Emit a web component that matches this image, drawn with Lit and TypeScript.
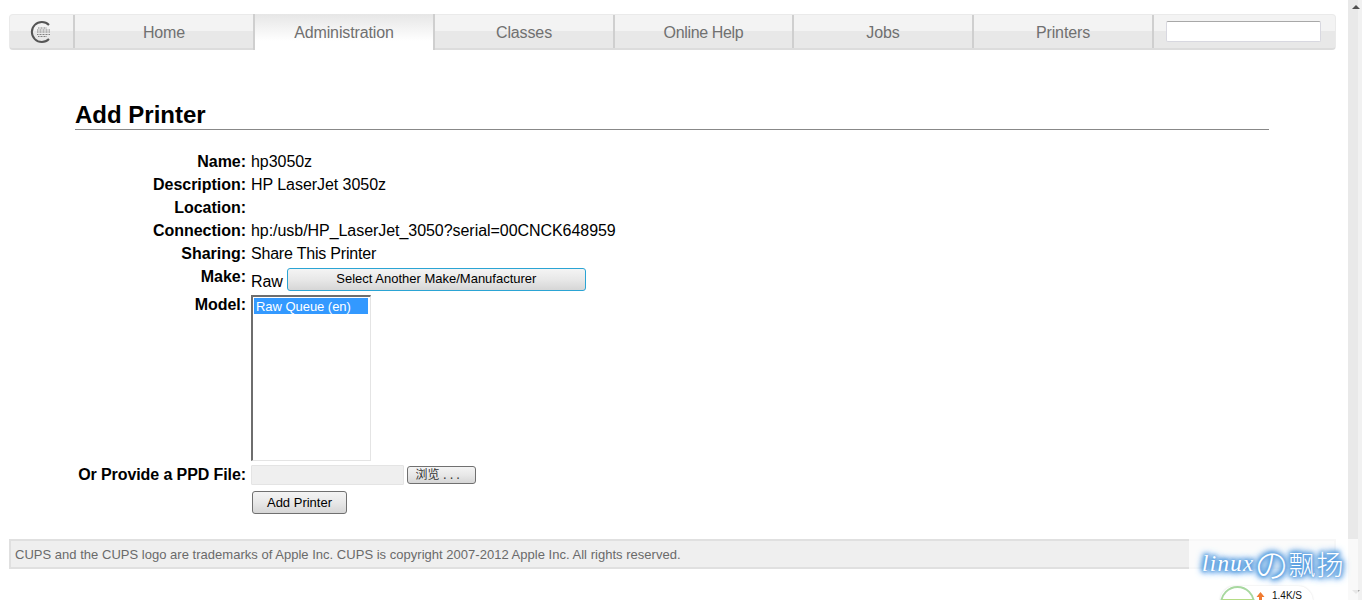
import { LitElement, html, css } from "lit";
import { customElement } from "lit/decorators.js";

const TABS = ["Home", "Administration", "Classes", "Online Help", "Jobs", "Printers"];

@customElement("app-root")
export class AppRoot extends LitElement {
  static styles = css`
    :host { display: flex; height: 600px; overflow: hidden; position: relative; background: #fff;
      font-family: "Liberation Sans", Arial, sans-serif; color: #000; }
    .page { width: 1348px; flex: none; padding: 14px 12px 0 9px; box-sizing: border-box; }
    .nav { display: flex; height: 36px; box-sizing: border-box; border: 1px solid #eaeaea; border-bottom: 2px solid #dcdcdc;
      border-radius: 4px; background: linear-gradient(#f3f3f3 0, #f3f3f3 50%, #e8e8e8 50%, #e8e8e8 100%); }
    .logo { width: 63px; flex: none; display: flex; align-items: center; justify-content: center; }
    .tab { flex: none; width: 180px; box-sizing: border-box; border-left: 2px solid #cfcfcf; display: flex; align-items: center; justify-content: center;
      font-size: 16px; color: #707070; padding-top: 2px; letter-spacing: -0.12px; }
    .tab.help { width: 179px; letter-spacing: -0.35px; }
    .tab.active { height: 36px; margin-top: -1px; padding-top: 1px; background: linear-gradient(#e6e6e6 0, #fff 75%, #fff 100%); border-right: 2px solid #cfcfcf; margin-right: -2px; width: 182px; position: relative; z-index: 1; }
    .search-cell { flex: 1; border-left: 2px solid #cfcfcf; display: flex; align-items: center; padding-left: 12px; }
    .search { width: 155px; height: 21px; box-sizing: border-box; background: #fff; border: 1px solid #d8d8e0; border-top: 1px solid #a8a8a8; border-radius: 2px; }
    .content { padding: 50px 67px 0 66px; }
    h1 { margin: 0; font-size: 24px; line-height: 29px; font-weight: bold; border-bottom: 1px solid #888; }
    .form { display: grid; grid-template-columns: 171px auto; column-gap: 5px; margin-top: 20px; font-size: 16px; line-height: 23px; justify-content: start; }
    .lbl { font-weight: bold; text-align: right; white-space: nowrap; letter-spacing: -0.03px; }
    .lbl.long { letter-spacing: -0.09px; }
    .val { white-space: nowrap; min-height: 23px; letter-spacing: -0.05px; }
    .val.tight { letter-spacing: -0.2px; }
    .make { display: flex; align-items: center; height: 28px; }
    .raw { margin-top: 4px; }
    .btn { box-sizing: border-box; font-family: "Liberation Sans", Arial, sans-serif; font-size: 13px; letter-spacing: 0; color: #000; padding: 0; display: flex; align-items: center; justify-content: center;
      background: linear-gradient(#f4f4f4, #e8e8e8 50%, #d6d6d6 100%); border-radius: 3px; border: 1px solid #707070; }
    .btn.sel { width: 299px; height: 23px; margin-left: 4px; margin-top: 1px; border: 1px solid #2ba4d4; padding-bottom: 2px; }
    .list { width: 120px; height: 166px; margin: 2px 0; box-sizing: border-box; border: 1px solid #e4e4e4; border-left: 2px solid #6e6e6e; border-top: 2px solid #6e6e6e; padding: 1px 1px 0 1px; font-size: 13px; line-height: 17px; letter-spacing: -0.04px; }
    .opt { background: #3399ff; color: #fff; padding-left: 2px; width: 112px; height: 16px; }
    .file { display: flex; align-items: center; height: 22px; }
    .file-in { width: 153px; height: 20px; box-sizing: border-box; background: #efefef; border: 1px solid #e4e4e4; border-radius: 1px; }
    .browse { width: 69px; height: 18px; margin-left: 3px; padding-right: 6px; font-family: "Noto Sans CJK SC", "Liberation Sans", sans-serif; font-size: 12px; color: #333; }
    .dots { font-family: "Liberation Mono", monospace; font-size: 11px; margin-left: 2px; }
    .add { width: 95px; height: 23px; margin: 5px 0 0 1px; }
    .footer { margin-top: 25px; height: 30px; box-sizing: border-box; background: #efefef; border: 2px solid #e0e0e0; font-size: 13px; letter-spacing: 0.02px; color: #6a6a6a; padding: 0 0 0 4px; display: flex; align-items: center; }
    .scroll { width: 14px; flex: none; background: linear-gradient(90deg, #e9e9e9 0, #e9e9e9 10px, #f1f1f1 10px); position: relative; }
    .up, .down { position: absolute; left: 4px; width: 0; height: 0; border-left: 4px solid transparent; border-right: 4px solid transparent; }
    .up { top: 5px; border-bottom: 4px solid #505050; }
    .down { bottom: 6px; border-top: 4px solid #a8a8a8; }
    .mark { position: absolute; left: 1189px; top: 539px; width: 169px; height: 61px; background: rgba(255,255,255,.72); overflow: hidden; }
    .mark-text { position: absolute; left: 13px; top: 8px; display: flex; align-items: center; height: 34px; color: #fff; white-space: nowrap;
      font-family: "Noto Sans CJK JP", "DejaVu Sans", sans-serif; font-weight: 300;
      text-shadow: 0 0 3px #5a9fe0, 0 0 4px #5a9fe0, 0 0 5px #5a9fe0, 0 0 6px #5a9fe0, 0 0 7px #5a9fe0, 0 0 8px #5a9fe0, 0 0 8px #5a9fe0; }
    .m-latin { font-family: "Liberation Serif", serif; font-style: italic; font-size: 23px; letter-spacing: 1.3px; }
    .m-no { font-size: 34px; line-height: 34px; }
    .m-han { font-size: 27px; line-height: 34px; letter-spacing: 1px; }
    .pill { position: absolute; left: 31px; top: 47px; width: 93px; height: 30px; border-radius: 15px; background: #fff; box-shadow: 0 0 2px #ddd; }
    .ring { position: absolute; left: 0; top: 0; width: 35px; height: 35px; box-sizing: border-box; border: 2px solid #a8d8a0; border-radius: 50%; background: linear-gradient(#fff 0, #fff 11px, #b4dc84 11px); }
    .arrow { position: absolute; left: 36px; top: 5px; display: block; }
    .speed { position: absolute; left: 52px; top: 6px; font-size: 10px; line-height: 8px; color: #111; }
  `;

  render() {
    return html`
      <div class="page">
        <div class="nav">
          <div class="logo">
            <svg width="24" height="24" viewBox="0 0 24 24" fill="none">
              <path d="M19 5 A10 10 0 1 0 19 19" stroke="#555" stroke-width="2" />
              <path d="M8 8 H17 M7 10 H20 M7 12 H20 M7 14.500 H20 M8 16.500 H17" stroke="#808080" stroke-width="1" stroke-dasharray="1 .5" />
            </svg>
          </div>
          ${TABS.map((t, i) => html`<div class="tab ${i === 1 ? "active" : ""} ${i === 3 ? "help" : ""}">${t}</div>`)}
          <div class="search-cell"><div class="search"></div></div>
        </div>
        <div class="content">
          <h1>Add Printer</h1>
          <div class="form">
            <div class="lbl">Name:</div><div class="val">hp3050z</div>
            <div class="lbl">Description:</div><div class="val">HP LaserJet 3050z</div>
            <div class="lbl">Location:</div><div class="val"></div>
            <div class="lbl">Connection:</div><div class="val">hp:/usb/HP_LaserJet_3050?serial=00CNCK648959</div>
            <div class="lbl">Sharing:</div><div class="val tight">Share This Printer</div>
            <div class="lbl">Make:</div>
            <div class="val make"><span class="raw">Raw</span><div class="btn sel">Select Another Make/Manufacturer</div></div>
            <div class="lbl">Model:</div>
            <div class="val"><div class="list"><div class="opt">Raw Queue (en)</div></div></div>
            <div class="lbl long">Or Provide a PPD File:</div>
            <div class="val file"><div class="file-in"></div><div class="btn browse"><span>浏览<span class="dots">...</span></span></div></div>
            <div></div>
            <div class="val"><div class="btn add">Add Printer</div></div>
          </div>
        </div>
        <div class="footer">CUPS and the CUPS logo are trademarks of Apple Inc. CUPS is copyright 2007-2012 Apple Inc. All rights reserved.</div>
      </div>
      <div class="scroll"><div class="up"></div><div class="down"></div></div>
      <div class="mark">
        <div class="mark-text"><span class="m-latin">linux</span><span class="m-no">の</span><span class="m-han">飘扬</span></div>
        <div class="pill">
          <div class="ring"></div>
          <svg class="arrow" width="9" height="12" viewBox="0 0 9 12"><path d="M4.500 1 L8.500 6 H6 V12 H3 V6 H.5 Z" fill="#f07a30"/></svg>
          <div class="speed">1.4K/S</div>
        </div>
      </div>
    `;
  }
}
